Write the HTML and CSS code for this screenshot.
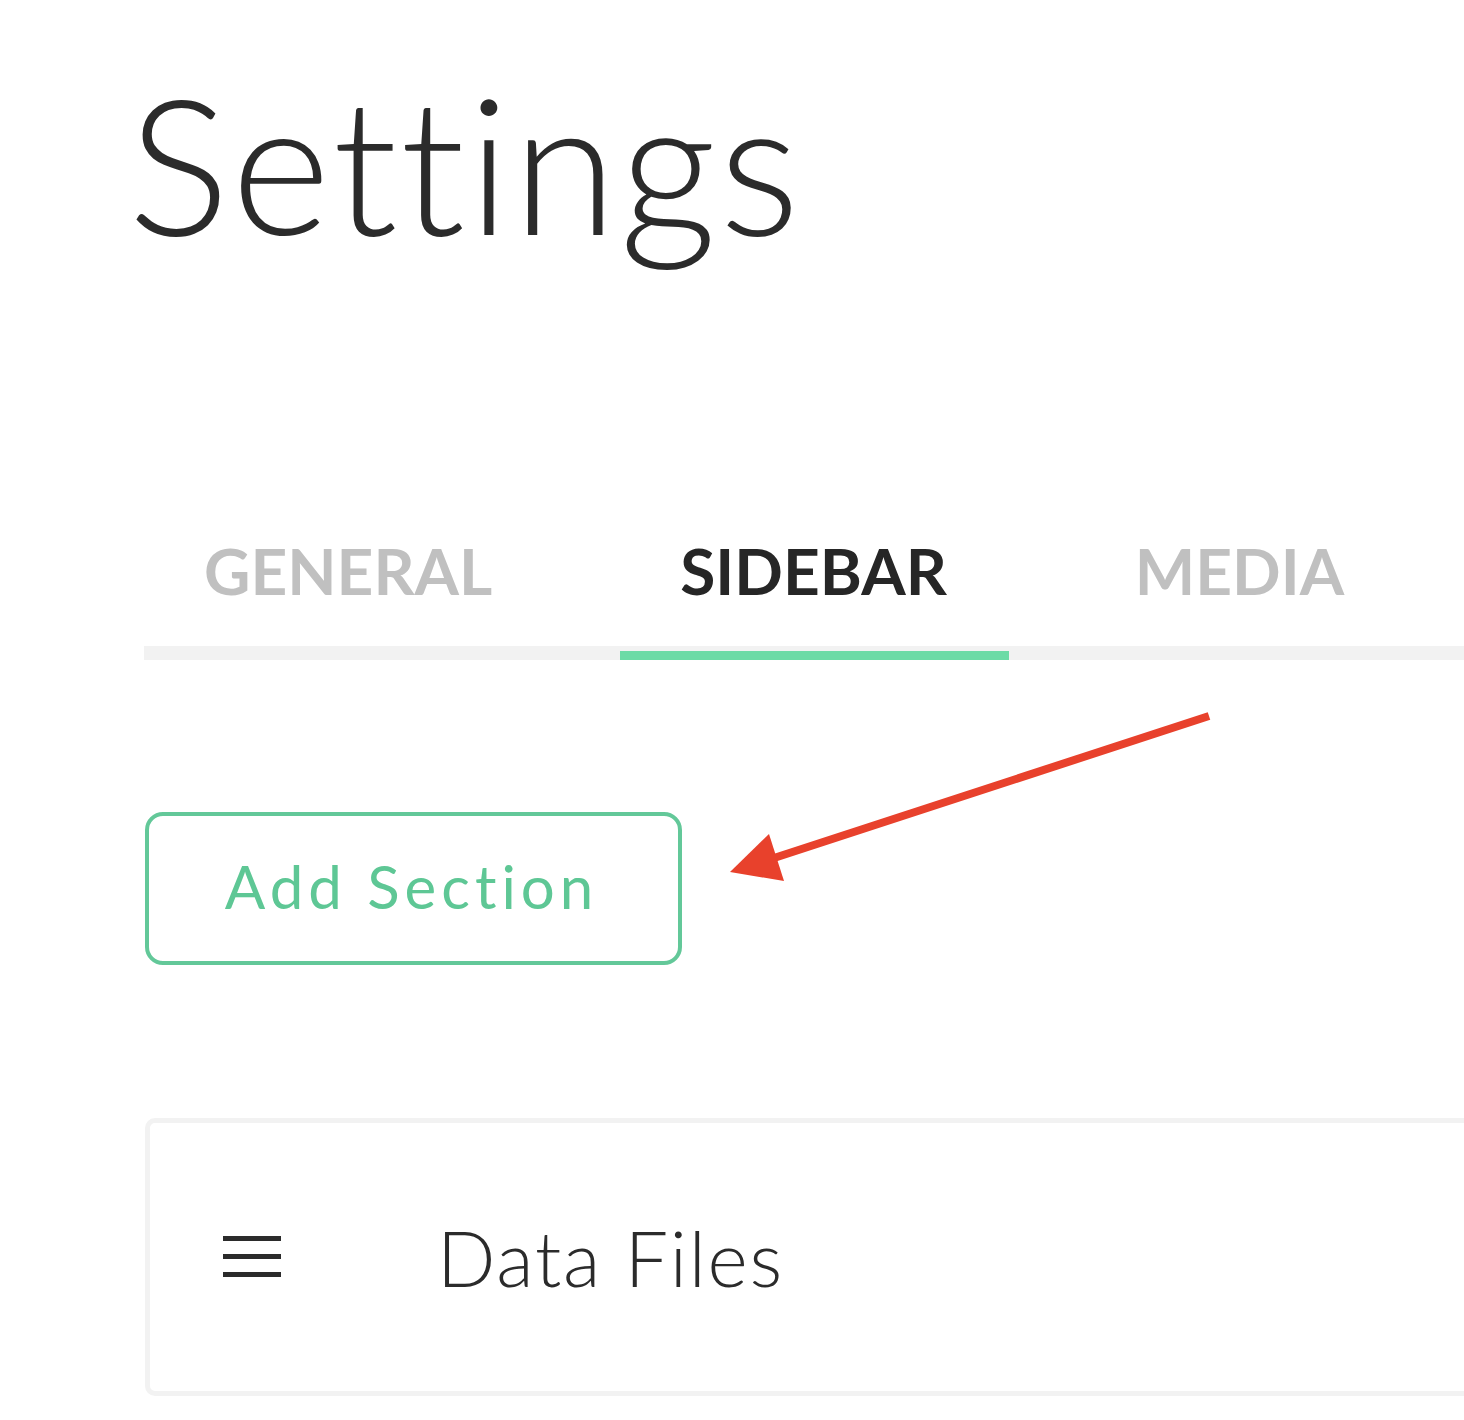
FILE: index.html
```html
<!DOCTYPE html>
<html lang="en">
<head>
<meta charset="utf-8">
<title>Settings</title>
<link rel="stylesheet" href="styles.css">
</head>
<body>
<div class="page">
  <h1 class="title">Settings</h1>
  <nav class="tabs">
    <a class="tab">GENERAL</a>
    <a class="tab tab-active">SIDEBAR</a>
    <a class="tab">MEDIA</a>
  </nav>
  <div class="actions">
    <button class="btn-add">Add Section</button>
    <svg class="annotation" width="520" height="200" viewBox="0 0 520 200" aria-hidden="true">
      <line x1="505" y1="14" x2="70" y2="156" stroke="#e8412c" stroke-width="8" stroke-linecap="butt"/>
      <polygon points="26,170 65,132 80,179" fill="#e8412c"/>
    </svg>
  </div>
  <div class="section-card">
    <span class="drag-handle">
      <svg width="58" height="42" viewBox="0 0 58 42" aria-hidden="true">
        <rect x="0" y="0" width="58" height="5" fill="#2b2b2b"/>
        <rect x="0" y="18" width="58" height="5" fill="#2b2b2b"/>
        <rect x="0" y="36" width="58" height="5" fill="#2b2b2b"/>
      </svg>
    </span>
    <span class="section-name">Data Files</span>
  </div>
</div>
</body>
</html>
```
FILE: styles.css
```css
html, body {
  margin: 0;
  padding: 0;
  background: #ffffff;
  overflow: hidden;
}

body {
  font-family: Lato, "Open Sans", sans-serif;
  color: #2b2b2b;
}

.page {
  width: 1500px;
  padding: 66px 0 0 144px;
}

.title {
  margin: 0 0 0 -16px;
  font-size: 190px;
  font-weight: 300;
  line-height: 1;
  letter-spacing: 2.5px;
}

.tabs {
  display: flex;
  gap: 66px;
  margin-top: 283px;
  box-shadow: inset 0 -14px 0 #f2f2f2;
}

.tab {
  display: block;
  padding: 0 62px 48px 60px;
  border-bottom: 9px solid transparent;
  font-size: 64px;
  font-weight: 700;
  line-height: 1;
  color: #c0c0c0;
  letter-spacing: 0;
}

.tab-active {
  color: #262626;
  border-bottom-color: #6cdba6;
}

.actions {
  position: relative;
  margin-top: 152px;
  height: 153px;
}

.btn-add {
  box-sizing: border-box;
  width: 537px;
  height: 153px;
  margin-left: 1px;
  border: 4px solid #63c899;
  border-radius: 18px;
  background: #ffffff;
  color: #5ec795;
  font-family: Lato, "Open Sans", sans-serif;
  font-size: 60px;
  font-weight: 400;
  letter-spacing: 5px;
  padding: 0 4px 6px 0;
}

.annotation {
  position: absolute;
  left: 560px;
  top: -110px;
  overflow: visible;
}

.section-card {
  box-sizing: border-box;
  display: flex;
  align-items: center;
  margin-top: 153px;
  margin-left: 1px;
  height: 278px;
  border: 5px solid #f2f2f2;
  border-radius: 10px;
  padding-left: 73px;
}

.drag-handle {
  display: flex;
  width: 58px;
  margin-right: 156px;
}

.section-name {
  font-size: 77px;
  font-weight: 300;
  letter-spacing: 1.8px;
  line-height: 1;
}
```
